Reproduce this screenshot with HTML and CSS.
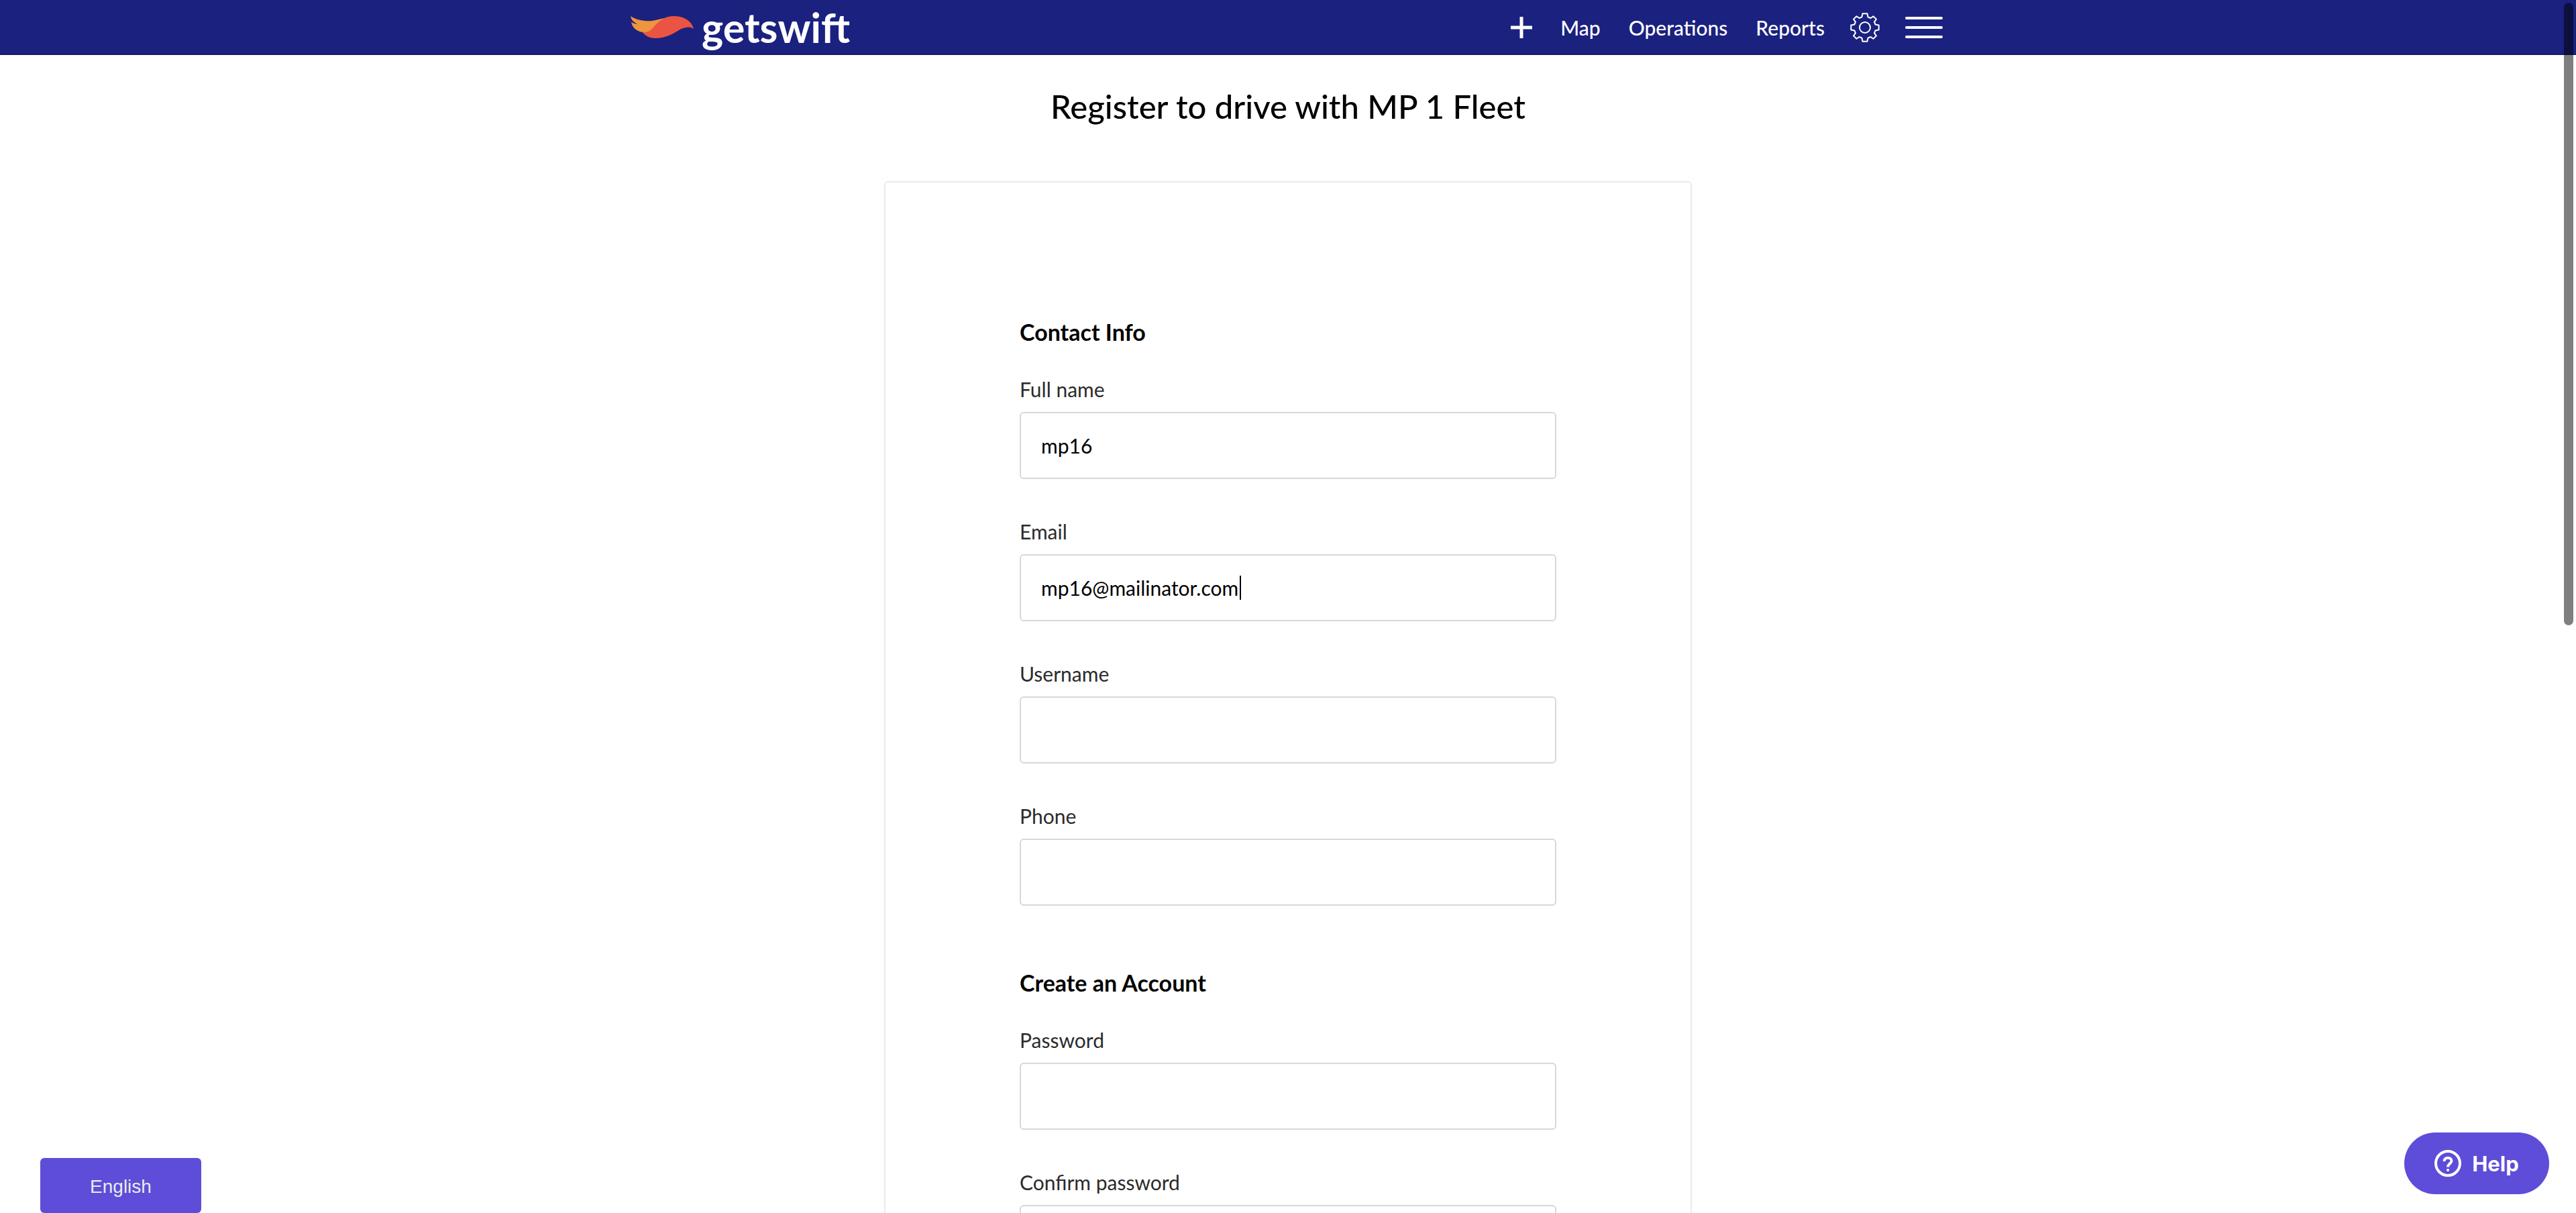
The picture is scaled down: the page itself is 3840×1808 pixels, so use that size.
FILE: index.html
```html
<!DOCTYPE html>
<html lang="en">
<head>
<meta charset="utf-8">
<title>Register to drive with MP 1 Fleet</title>
<link rel="stylesheet" href="styles.css">
</head>
<body>
<header class="navbar">
  <div class="navbar-inner">
    <a class="brand" href="#">
      <svg class="brand-mark" viewBox="0 0 94 34" aria-hidden="true">
        <path fill="#f0953f" d="M0 0C8 6 22 8 32 7C40 6 46 3 54 3L30 26C24 25 17 24 17 24C8 22 2 16 1 9C4 11 8 12 10 12C5 9 1 6 0 0Z"/>
        <path fill="#ea5443" d="M17 23C22 25 28 24 33 18C42 7 50 0 65 0C79 0 91 7 94 19C88 14 79 17 72 21C62 27 52 33 37 33C28 33 21 29 17 23Z"/>
      </svg>
      <span class="brand-name">getswift</span>
    </a>
    <nav class="menu">
      <div class="menu-links">
        <button class="icon-button" type="button" aria-label="Add">
          <svg class="icon-plus" viewBox="0 0 32 32" aria-hidden="true"><path d="M16 0V32M0 16H32" stroke="#fff" stroke-width="5"/></svg>
        </button>
        <a class="menu-link" href="#">Map</a>
        <a class="menu-link" href="#">Operations</a>
        <a class="menu-link" href="#">Reports</a>
      </div>
      <button class="icon-button" type="button" aria-label="Settings">
        <svg class="icon-gear" viewBox="0 0 44 44" aria-hidden="true" fill="none" stroke="#fff" stroke-width="2" stroke-linejoin="round">
          <path d="M18.500 1.300L25.500 1.300L26.500 6.300L30.500 8L34.500 5.200L39 9.600L36 13.600L37.600 17.500L42.700 18.500L42.700 25.500L37.600 26.500L36 30.400L39 34.400L34.500 38.800L30.500 36L26.500 37.700L25.500 42.700L18.500 42.700L17.500 37.700L13.500 36L9.500 38.800L5 34.400L8 30.400L6.400 26.500L1.300 25.500L1.300 18.500L6.400 17.500L8 13.600L5 9.600L9.500 5.200L13.500 8L17.500 6.300Z"/>
          <circle cx="22" cy="22" r="8"/>
        </svg>
      </button>
      <button class="icon-button" type="button" aria-label="Menu">
        <svg class="icon-bars" viewBox="0 0 56 32" aria-hidden="true"><path d="M2 2H54M2 16H54M2 30H54" stroke="#fff" stroke-width="4" stroke-linecap="round"/></svg>
      </button>
    </nav>
  </div>
</header>

<main class="page">
  <h1 class="page-title">Register to drive with MP 1 Fleet</h1>
  <form class="card">
    <section class="group">
      <h2 class="group-title">Contact Info</h2>
      <div class="field">
        <label class="label" for="name">Full name</label>
        <input class="input" id="name" type="text" value="mp16">
      </div>
      <div class="field">
        <label class="label" for="email">Email</label>
        <div class="input-wrap">
          <input class="input" id="email" type="text" value="mp16@mailinator.com">
          <span class="caret"></span>
        </div>
      </div>
      <div class="field">
        <label class="label" for="username">Username</label>
        <input class="input" id="username" type="text">
      </div>
      <div class="field">
        <label class="label" for="phone">Phone</label>
        <input class="input" id="phone" type="tel">
      </div>
    </section>
    <section class="group">
      <h2 class="group-title">Create an Account</h2>
      <div class="field">
        <label class="label" for="password">Password</label>
        <input class="input" id="password" type="password">
      </div>
      <div class="field">
        <label class="label" for="confirm">Confirm password</label>
        <input class="input" id="confirm" type="password">
      </div>
    </section>
  </form>
</main>

<button class="language" type="button">English</button>
<button class="help" type="button">
  <svg class="icon-help" viewBox="0 0 40 40" aria-hidden="true" fill="none" stroke="#fff" stroke-width="4">
    <circle cx="20" cy="20" r="18"/>
    <path d="M14.500 17C14.500 9.800 25.500 10.200 25.500 16.200C25.500 20 20 20.500 20 25.500"/>
    <circle cx="20" cy="30" r="2" fill="#fff" stroke="none"/>
  </svg>
  Help
</button>
<div class="scroll-thumb"></div>
</body>
</html>
```
FILE: styles.css
```css
* {
  box-sizing: border-box;
}

html {
  scrollbar-width: none;
}

body {
  margin: 0;
  background: #fff;
  color: #000;
  font-family: Lato, "Liberation Sans", sans-serif;
  font-size: 30px;
  line-height: 36px;
}

button {
  border: 0;
  cursor: pointer;
}

.navbar {
  background: #1b217f;
  box-shadow: inset 0 -2px #171c6c;
}

.navbar-inner {
  display: flex;
  align-items: center;
  justify-content: space-between;
  max-width: 1960px;
  height: 82px;
  margin: 0 auto;
  padding-right: 4px;
}

.brand {
  display: flex;
  align-items: center;
  gap: 12px;
  color: #fff;
  text-decoration: none;
}

.brand-mark {
  width: 94px;
  height: 34px;
}

.brand-name {
  font-size: 61px;
  line-height: 76px;
  font-weight: 700;
}

.menu {
  display: flex;
  align-items: center;
  gap: 38px;
}

.menu-links {
  display: flex;
  align-items: center;
  gap: 42px;
}

.menu-link {
  color: #fff;
  font-weight: 500;
  text-decoration: none;
}

.icon-button {
  display: flex;
  padding: 0;
  background: none;
}

.icon-plus {
  width: 32px;
  height: 32px;
}

.icon-gear {
  width: 44px;
  height: 44px;
}

.icon-bars {
  width: 56px;
  height: 32px;
}

.page-title {
  margin: 46px 0 82px;
  font-size: 49px;
  line-height: 60px;
  font-weight: 500;
  text-align: center;
}

.card {
  max-width: 1204px;
  margin: 0 auto 80px;
  padding: 200px;
  border: 2px solid #eaeaea;
  border-radius: 6px;
}

.group {
  margin-bottom: 92px;
}

.group-title {
  margin: 0 0 44px;
  font-size: 34px;
  line-height: 46px;
  font-weight: 700;
}

.field {
  margin-bottom: 60px;
}

.label {
  display: block;
  margin-bottom: 16px;
  color: #2b2b2b;
}

.input-wrap {
  position: relative;
}

.input {
  display: block;
  width: 100%;
  height: 100px;
  padding: 0 30px;
  border: 2px solid #d8d8d8;
  border-radius: 6px;
  background: #fff;
  color: #000;
  font: inherit;
}

.caret {
  position: absolute;
  top: 32px;
  left: 328px;
  width: 2px;
  height: 36px;
  background: #000;
}

.language {
  position: fixed;
  left: 60px;
  bottom: 0;
  width: 240px;
  height: 82px;
  padding-top: 4px;
  border-radius: 6px;
  background: #5e4dd8;
  color: #eaeaea;
  font-family: "Liberation Sans", sans-serif;
  font-size: 28px;
}

.help {
  position: fixed;
  right: 40px;
  bottom: 28px;
  display: flex;
  align-items: center;
  justify-content: center;
  gap: 16px;
  width: 216px;
  height: 92px;
  border-radius: 46px;
  background: #5e4dd8;
  color: #fff;
  font-family: Inter, sans-serif;
  font-size: 31px;
  font-weight: 700;
}

.icon-help {
  width: 40px;
  height: 40px;
}

.scroll-thumb {
  position: fixed;
  top: 4px;
  right: 4px;
  width: 14px;
  height: calc(50% + 24px);
  border-radius: 7px;
  background: rgba(0, 0, 0, 0.5);
}
```
